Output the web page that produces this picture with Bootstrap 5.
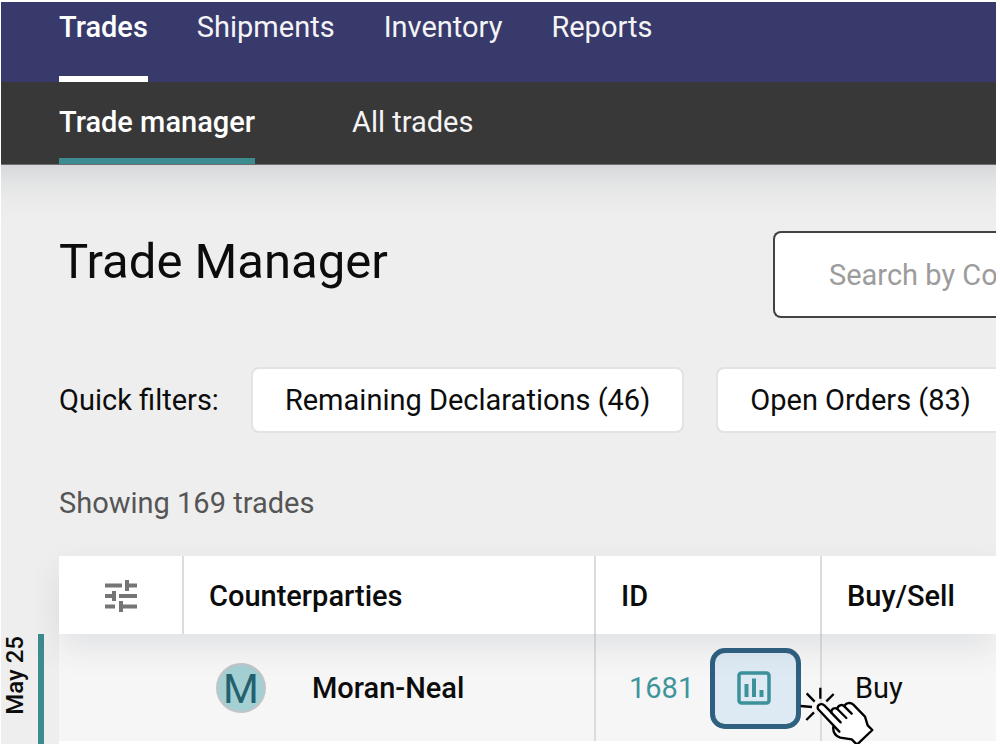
<!DOCTYPE html>
<html lang="en">
<head>
<meta charset="utf-8">
<meta name="viewport" content="width=device-width, initial-scale=1">
<title>Trade Manager</title>
<link href="https://cdn.jsdelivr.net/npm/bootstrap@5.3.0/dist/css/bootstrap.min.css" rel="stylesheet">
<style>
  body { font-family: Roboto, "Liberation Sans", sans-serif; font-size: 29px; line-height: 36px; color: #0c0c0c; background: #fff; padding: 2px 4px 4px 1px; }
  .app-shell { background: #eee; overflow: hidden; }
  .main-bar { background: #383a6c; padding-left: 58px; height: 80px; gap: 49px; }
  .sub-bar { background: #383838; padding-left: 58px; height: 83px; gap: 97px; border-bottom: 1px solid #6e6c6c; }
  .bar-link { color: #f4f4f6; text-decoration: none; display: flex; height: 100%; border-bottom: 6px solid transparent; }
  .main-bar .bar-link { padding-top: 7px; }
  .sub-bar .bar-link { padding-top: 22px; }
  .bar-link.current { font-weight: 500; color: #fff; border-color: #fff; }
  .sub-bar .bar-link.current { border-color: #3c8b90; }
  .page-body { background: linear-gradient(#d6d8db, #e2e3e4 16px, #eaeaea 32px, #eee 56px); }
  .page-head { padding: 66px 0 0 58px; }
  .page-title { font-size: 49px; line-height: 62px; font-weight: 400; margin: 0; }
  .search-box { width: 223px; height: 87px; border: 2px solid #424242; border-right: 0; border-radius: 8px 0 0 8px; padding: 0 0 0 54px; font-size: 29px; color: #222; background: #fff; }
  .search-box::placeholder { color: #9c9c9c; opacity: 1; }
  .filters { padding: 49px 0 0 58px; gap: 32px; }
  .filter-btn { background: #fff; border: 2px solid #e3e3e3; border-radius: 8px; height: 66px; font-size: 29px; line-height: 36px; padding: 0 32px; color: #0c0c0c; white-space: nowrap; }
  .filter-open { border-right: 0; border-radius: 8px 0 0 8px; padding-right: 0; }
  .result-count { padding: 52px 0 35px 58px; margin: 0; color: #555; }
  .date-rail { width: 58px; padding-top: 78px; }
  .date-group { height: 100%; border-right: 6px solid #3c8b90; width: 43px; padding-top: 2px; }
  .date-label { writing-mode: vertical-rl; transform: rotate(180deg); font-size: 24px; line-height: 28px; font-weight: 500; }
  .trade-table { table-layout: fixed; margin: 0; border-bottom: 3px solid #fff; color: #0c0c0c; }
  .trade-table > thead { position: relative; z-index: 1; box-shadow: 0 14px 32px rgba(50, 60, 80, .1); }
  .trade-table > thead > tr > th { height: 78px; background: #fff; font-weight: 500; padding: 2px 25px 0; border: 0; border-right: 2px solid #dcdcdc; vertical-align: middle; }
  .trade-table > tbody > tr > td { height: 108px; background: #f6f6f6; padding: 2px 33px 0; border: 0; border-right: 2px solid #dcdcdc; vertical-align: middle; }
  .trade-table > tbody > tr > td.plain, .trade-table > thead > tr > th:last-child, .trade-table > tbody > tr > td:last-child { border-right: 0; }
  .avatar { width: 50px; height: 50px; border: 2px solid #c2c5c6; background: #a4d0d4; color: #24616f; font-size: 41px; line-height: 48px; }
  .party-name { font-weight: 500; margin-left: 46px; }
  .trade-id { color: #3f959b; text-decoration: none; }
  .chart-btn { width: 91px; height: 81px; border: 5px solid #2f6080; border-radius: 15px; background: #deeaf3; padding: 0; color: #3c919a; }
  .click-hand { position: absolute; left: 90px; top: 38px; z-index: 2; pointer-events: none; }
</style>
</head>
<body>
<div class="app-shell">
  <nav class="main-bar d-flex" aria-label="Main">
    <a class="bar-link current" href="#trades">Trades</a>
    <a class="bar-link" href="#shipments">Shipments</a>
    <a class="bar-link" href="#inventory">Inventory</a>
    <a class="bar-link" href="#reports">Reports</a>
  </nav>
  <nav class="sub-bar d-flex" aria-label="Trades">
    <a class="bar-link current" href="#manager">Trade manager</a>
    <a class="bar-link" href="#all">All trades</a>
  </nav>

  <main class="page-body">
    <div class="page-head d-flex justify-content-between">
      <h1 class="page-title">Trade Manager</h1>
      <input class="search-box" type="text" aria-label="Search" placeholder="Search by Co">
    </div>

    <div class="filters d-flex align-items-center">
      <span class="text-nowrap">Quick filters:</span>
      <button type="button" class="filter-btn">Remaining Declarations (46)</button>
      <button type="button" class="filter-btn filter-open flex-grow-1 text-start">Open Orders (83)</button>
    </div>

    <p class="result-count">Showing 169 trades</p>

    <div class="d-flex">
      <div class="date-rail flex-shrink-0">
        <div class="date-group"><span class="date-label">May 25</span></div>
      </div>
      <table class="table trade-table flex-grow-1">
        <colgroup><col style="width:124px"><col style="width:412px"><col style="width:226px"><col></colgroup>
        <thead>
          <tr>
            <th scope="col">
              <svg class="d-block mx-auto" width="32" height="32" viewBox="0 0 32 32" fill="none" stroke="#757575" stroke-width="4" aria-label="Columns"><path d="M0 5.500h17M22 0v11M22 5.500h10M0 16h10M9 11v10M14 16h18M0 26.500h10M16 21v11M16 26.500h16"/></svg>
            </th>
            <th scope="col">Counterparties</th>
            <th scope="col">ID</th>
            <th scope="col">Buy/Sell</th>
          </tr>
        </thead>
        <tbody>
          <tr>
            <td class="plain"></td>
            <td>
              <div class="d-flex align-items-center">
                <span class="avatar rounded-circle d-flex justify-content-center flex-shrink-0">M</span>
                <span class="party-name text-nowrap">Moran-Neal</span>
              </div>
            </td>
            <td>
              <div class="d-flex align-items-center">
                <a class="trade-id" href="#1681">1681</a>
                <div class="position-relative ms-3">
                  <button type="button" class="chart-btn d-flex align-items-center justify-content-center" aria-label="Show chart">
                    <svg class="me-1" width="34" height="34" viewBox="0 0 34 34" fill="none" stroke="currentColor" stroke-width="3.500"><rect x="2" y="2" width="30" height="30" rx="2.500"/><path d="M9.500 13v13M17 7.500V26M24.500 19v7" stroke-width="4"/></svg>
                  </button>
                  <svg class="click-hand" width="74" height="60" viewBox="330 138 222 180" fill="none" stroke="#000" stroke-width="7" stroke-linecap="round" stroke-linejoin="round" aria-hidden="true">
                    <path fill="#fff" d="M448 275L384 207C380 197 391 187 403 196L424 217C424 206 435 201 442 207C443 196 456 191 463 199C467 188 481 186 490 194L525 230L533 256L547 270L501 314L485 298L451 293C437 288 428 277 430 260"/>
                    <path d="M423 217L452 247M442 207L469 234M463 199L485 221"/>
                    <path stroke-linecap="butt" d="M391 143V176M431 162L409 184M350 160L374 185M332 198L366 201M349 240L372 217"/>
                  </svg>
                </div>
              </div>
            </td>
            <td>Buy</td>
          </tr>
        </tbody>
      </table>
    </div>
  </main>
</div>
<script src="https://cdn.jsdelivr.net/npm/bootstrap@5.3.0/dist/js/bootstrap.bundle.min.js"></script>
</body>
</html>
